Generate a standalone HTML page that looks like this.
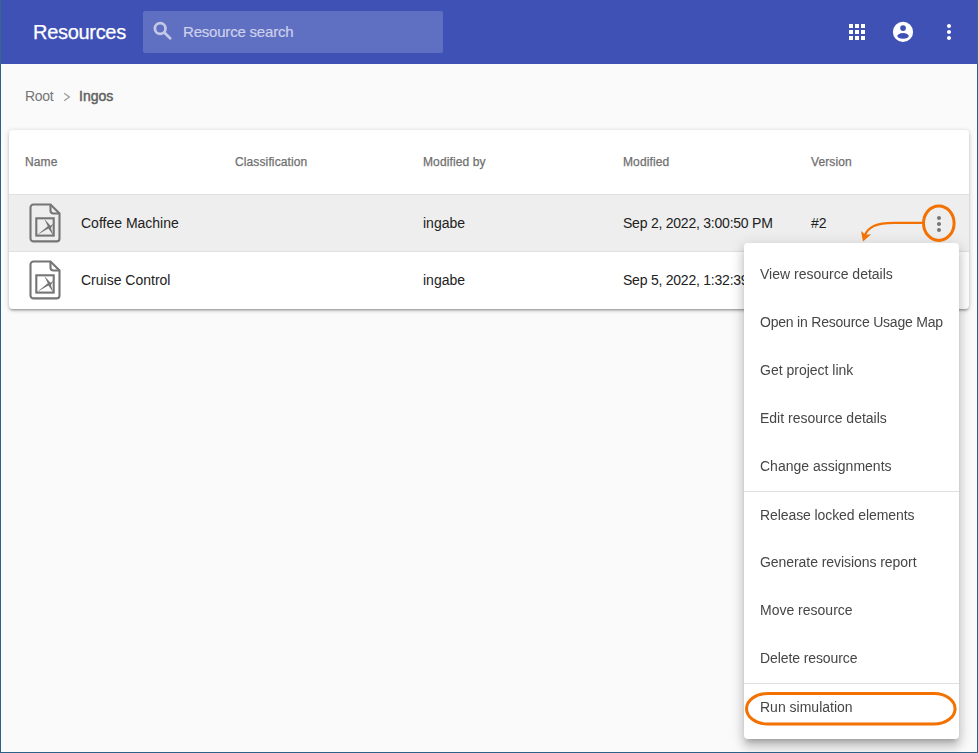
<!DOCTYPE html>
<html><head><meta charset="utf-8">
<style>
*{box-sizing:border-box;margin:0;padding:0}
html,body{width:978px;height:753px;overflow:hidden;background:#fafafa;font-family:"Liberation Sans",sans-serif;}
.abs{position:absolute;white-space:nowrap}
#hdr{position:absolute;left:0;top:0;width:978px;height:64px;background:#3f51b5}
#title{left:33px;top:20px;font-size:20px;color:#fff;line-height:24px;letter-spacing:-0.3px;-webkit-text-stroke:0.25px #fff}
#search{position:absolute;left:143px;top:11px;width:300px;height:42px;background:#5f6fc1;border-radius:2px}
#stext{left:183px;top:22px;font-size:15px;line-height:20px;color:#cdd1ec;letter-spacing:-0.2px;-webkit-text-stroke:0.2px #cdd1ec}
#bc-root{left:25px;top:88px;font-size:14px;line-height:16px;color:#757575;letter-spacing:-0.3px}
#bc-ingos{left:79px;top:88px;font-size:14px;line-height:16px;color:#616161;-webkit-text-stroke:0.45px #616161}
#card{position:absolute;left:9px;top:130px;width:960px;height:179px;background:#fff;border-radius:4px;box-shadow:0 2px 2px 0 rgba(0,0,0,.14),0 3px 1px -2px rgba(0,0,0,.12),0 1px 5px 0 rgba(0,0,0,.2)}
.th{top:155px;font-size:12px;line-height:14px;color:#6f6f6f;letter-spacing:0.12px;-webkit-text-stroke:0.25px #6f6f6f}
.row{position:absolute;left:9px;width:960px}
.td{font-size:14px;line-height:16px;color:#212121}
#menu{position:absolute;left:744px;top:243px;width:215px;height:496px;background:#fff;border-radius:4px;box-shadow:0 5px 5px -3px rgba(0,0,0,.2),0 8px 10px 1px rgba(0,0,0,.14),0 3px 14px 2px rgba(0,0,0,.12)}
.mi{left:760px;font-size:14px;line-height:16px;color:#464646;will-change:transform}
.div{position:absolute;left:744px;width:215px;height:1px;background:#e0e0e0}
#bl{position:absolute;left:0;top:0;width:1px;height:753px;background:linear-gradient(#3a6a80 0,#3a6a80 64px,#2d6189 64px)}
#br{position:absolute;left:977px;top:0;width:1px;height:753px;background:linear-gradient(#3a6a80 0,#3a6a80 64px,#2d6189 64px)}
#bb{position:absolute;left:0;top:752px;width:978px;height:1px;background:#2d6189}
</style></head><body>
<div id="hdr"></div>
<div class="abs" id="title">Resources</div>
<div id="search"></div>
<svg class="abs" style="left:145px;top:15px" width="35" height="30" viewBox="145 15 35 30"><g fill="none" stroke="#c3c8e6" stroke-width="2.8"><circle cx="160.2" cy="28.5" r="5.3"/><path d="M164.3 32.6L170.1 38.2" stroke-linecap="round"/></g></svg>
<div class="abs" id="stext">Resource search</div>
<svg class="abs" style="left:845px;top:20px" width="24" height="24" viewBox="0 0 24 24"><path fill="#fff" d="M4 8h4V4H4v4zm6 12h4v-4h-4v4zm-6 0h4v-4H4v4zm0-6h4v-4H4v4zm6 0h4v-4h-4v4zm6-10v4h4V4h-4zm-6 4h4V4h-4v4zm6 6h4v-4h-4v4zm0 6h4v-4h-4v4z"/></svg>
<svg class="abs" style="left:885px;top:15px" width="35" height="35" viewBox="885 15 35 35"><path fill="#fff" fill-rule="evenodd" d="M913.1 31.9A10.1 10.1 0 1 1 892.9 31.9A10.1 10.1 0 1 1 913.1 31.9ZM905.9 28.1A2.85 2.85 0 1 0 900.2 28.1A2.85 2.85 0 1 0 905.9 28.1ZM908.8 35.9A5.75 2.8 0 1 0 897.3 35.9A5.75 2.8 0 1 0 908.8 35.9Z"/></svg>
<svg class="abs" style="left:937px;top:20px" width="24" height="24" viewBox="0 0 24 24"><path fill="#fff" d="M12 8c1.1 0 2-.9 2-2s-.9-2-2-2-2 .9-2 2 .9 2 2 2zm0 2c-1.1 0-2 .9-2 2s.9 2 2 2 2-.9 2-2-.9-2-2-2zm0 6c-1.1 0-2 .9-2 2s.9 2 2 2 2-.9 2-2-.9-2-2-2z"/></svg>

<div class="abs" id="bc-root">Root</div>
<svg class="abs" style="left:61px;top:90px" width="12" height="14" viewBox="0 0 12 14"><path d="M3.2 3.2L8.4 7L3.2 10.8" fill="none" stroke="#9a9a9a" stroke-width="1.2"/></svg>
<div class="abs" id="bc-ingos">Ingos</div>

<div id="card"></div>
<div class="abs th" style="left:25px">Name</div>
<div class="abs th" style="left:235px">Classification</div>
<div class="abs th" style="left:423px">Modified by</div>
<div class="abs th" style="left:623px">Modified</div>
<div class="abs th" style="left:811px">Version</div>
<div class="row" style="top:194px;height:1px;background:#e0e0e0"></div>
<div class="row" style="top:195px;height:56px;background:#eeeeee"></div>
<div class="row" style="top:251px;height:1px;background:#e0e0e0"></div>

<svg class="abs" style="left:28px;top:202px" width="34" height="42" viewBox="0 0 34 42"><g fill="none" stroke="#757575" stroke-width="2.1"><path d="M5.5 2.5h17l9 9V36.4a3 3 0 0 1-3 3h-23a3 3 0 0 1-3-3V5.5a3 3 0 0 1 3-3z"/><path d="M22.5 2.5v6a3 3 0 0 0 3 3h6"/><rect x="8.3" y="16.3" width="17.4" height="17.3"/></g><path fill="#757575" d="M16.3 17L22.6 23.8L25.8 21.6L22.9 26L25.3 33.4L20.4 26.6L9 33L19.8 24.2z"/></svg>
<svg class="abs" style="left:28px;top:259px" width="34" height="42" viewBox="0 0 34 42"><g fill="none" stroke="#757575" stroke-width="2.1"><path d="M5.5 2.5h17l9 9V36.4a3 3 0 0 1-3 3h-23a3 3 0 0 1-3-3V5.5a3 3 0 0 1 3-3z"/><path d="M22.5 2.5v6a3 3 0 0 0 3 3h6"/><rect x="8.3" y="16.3" width="17.4" height="17.3"/></g><path fill="#757575" d="M16.3 17L22.6 23.8L25.8 21.6L22.9 26L25.3 33.4L20.4 26.6L9 33L19.8 24.2z"/></svg>

<div class="abs td" style="left:81px;top:215px">Coffee Machine</div>
<div class="abs td" style="left:423px;top:215px">ingabe</div>
<div class="abs td" style="left:623px;top:215px;letter-spacing:-0.23px">Sep 2, 2022, 3:00:50 PM</div>
<div class="abs td" style="left:811px;top:215px">#2</div>
<svg class="abs" style="left:927px;top:212px" width="24" height="24" viewBox="0 0 24 24"><path fill="#757575" d="M12 8c1.1 0 2-.9 2-2s-.9-2-2-2-2 .9-2 2 .9 2 2 2zm0 2c-1.1 0-2 .9-2 2s.9 2 2 2 2-.9 2-2-.9-2-2-2zm0 6c-1.1 0-2 .9-2 2s.9 2 2 2 2-.9 2-2-.9-2-2-2z"/></svg>

<div class="abs td" style="left:81px;top:272px">Cruise Control</div>
<div class="abs td" style="left:423px;top:272px">ingabe</div>
<div class="abs td" style="left:623px;top:272px;letter-spacing:-0.23px">Sep 5, 2022, 1:32:39 PM</div>

<div id="menu"></div>
<div class="abs mi" style="top:266px">View resource details</div>
<div class="abs mi" style="top:314px;letter-spacing:-0.21px">Open in Resource Usage Map</div>
<div class="abs mi" style="top:362px">Get project link</div>
<div class="abs mi" style="top:410px">Edit resource details</div>
<div class="abs mi" style="top:458px">Change assignments</div>
<div class="div" style="top:491px"></div>
<div class="abs mi" style="top:507px;letter-spacing:-0.09px">Release locked elements</div>
<div class="abs mi" style="top:554px;letter-spacing:-0.06px">Generate revisions report</div>
<div class="abs mi" style="top:602px">Move resource</div>
<div class="abs mi" style="top:650px;letter-spacing:-0.1px">Delete resource</div>
<div class="div" style="top:683px"></div>
<div class="abs mi" style="top:699px">Run simulation</div>

<svg class="abs" style="left:0;top:0" width="978" height="753" viewBox="0 0 978 753">
<g fill="none" stroke="#f37100">
<ellipse cx="938.8" cy="223.2" rx="15.3" ry="17.2" stroke-width="3"/>
<path d="M923 222.8H894C876 222.8 868 227 864.5 236" stroke-width="2.2"/>
<rect x="746.5" y="693.5" width="208.6" height="30.5" rx="21" ry="15.25" stroke-width="3"/>
</g>
<path fill="#f37100" d="M863 241.5L861 231L865.3 234.8L871.2 234.2z"/>
</svg>
<div id="bl"></div><div id="br"></div><div id="bb"></div>
</body></html>
